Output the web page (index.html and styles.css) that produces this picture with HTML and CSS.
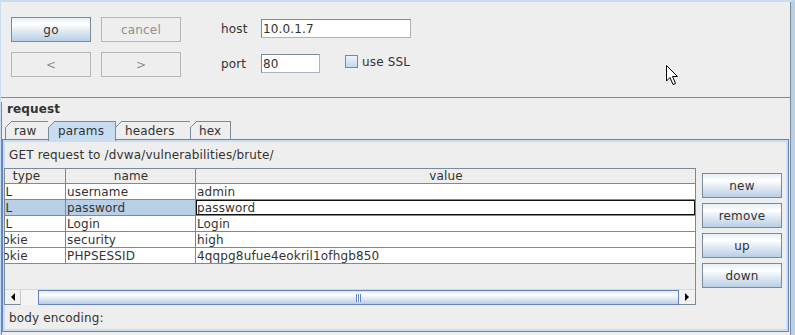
FILE: index.html
```html
<!DOCTYPE html>
<html lang="en">
<head>
  <meta charset="UTF-8">
  <title>Repeater</title>
  <link rel="stylesheet" href="styles.css">
</head>
<body>
  <div class="window">
    <div class="main">
      <div class="toolbar">
        <div class="tool-row">
          <button class="btn">go</button>
          <button class="btn" disabled>cancel</button>
          <span class="field-label">host</span>
          <input class="field field-host" value="10.0.1.7">
        </div>
        <div class="tool-row">
          <button class="btn" disabled>&lt;</button>
          <button class="btn" disabled>&gt;</button>
          <span class="field-label">port</span>
          <input class="field field-port" value="80">
          <span class="ssl">
            <span class="checkbox"></span>
            <span>use SSL</span>
          </span>
        </div>
      </div>

      <div class="request">
        <div class="request-title">request</div>
        <div class="tabs">
          <div class="tab tab-raw">raw</div>
          <div class="tab tab-params active">params</div>
          <div class="tab tab-headers">headers</div>
          <div class="tab tab-hex">hex</div>
        </div>

        <div class="tab-body">
          <div class="summary">GET request to /dvwa/vulnerabilities/brute/</div>

          <div class="params">
            <div class="table-pane">
              <div class="viewport">
                <table>
                  <colgroup>
                    <col class="col-type">
                    <col class="col-name">
                    <col class="col-value">
                  </colgroup>
                  <thead>
                    <tr>
                      <th>type</th>
                      <th>name</th>
                      <th class="value">value</th>
                    </tr>
                  </thead>
                  <tbody>
                    <tr>
                      <td>URL</td>
                      <td>username</td>
                      <td class="value">admin</td>
                    </tr>
                    <tr class="selected">
                      <td>URL</td>
                      <td>password</td>
                      <td class="value editing">password</td>
                    </tr>
                    <tr>
                      <td>URL</td>
                      <td>Login</td>
                      <td class="value">Login</td>
                    </tr>
                    <tr>
                      <td>cookie</td>
                      <td>security</td>
                      <td class="value">high</td>
                    </tr>
                    <tr>
                      <td>cookie</td>
                      <td>PHPSESSID</td>
                      <td class="value">4qqpg8ufue4eokril1ofhgb850</td>
                    </tr>
                  </tbody>
                </table>
              </div>
              <div class="hscroll">
                <div class="scroll-btn scroll-left"><span class="arrow-left"></span></div>
                <div class="thumb"><span class="grip"></span></div>
                <div class="scroll-btn scroll-right"><span class="arrow-right"></span></div>
              </div>
            </div>

            <div class="side-buttons">
              <button class="btn">new</button>
              <button class="btn">remove</button>
              <button class="btn">up</button>
              <button class="btn">down</button>
            </div>
          </div>

          <div class="encoding">body encoding:</div>
        </div>
      </div>
    </div>
  </div>

  <svg class="cursor" width="14" height="22" viewBox="0 0 14 22">
    <path d="M0.5 0.5 L0.5 16 L4 12.5 L7 19.5 L9.5 18.5 L6.5 11.5 L11.5 11.5 Z" fill="#ffffff" stroke="#000000" stroke-width="1" stroke-linejoin="round"/>
  </svg>
</body>
</html>
```

FILE: styles.css
```css
body {
  margin: 0;
  background-color: #eeeeee;
  font-family: "DejaVu Sans", sans-serif;
  font-size: 12px;
  letter-spacing: 0.15px;
  color: #333333;
}

.window {
  width: 795px;
  height: 335px;
  box-sizing: border-box;
  border-top: 2px solid #c8ddf2;
  border-left: 1px solid #c8ddf2;
  border-right: 4px solid #b8cfe5;
  overflow: hidden;
}

.main {
  height: 100%;
  border-right: 1px solid #7a8a99;
}

/* top controls */

.toolbar {
  height: 96px;
  box-sizing: border-box;
  border-bottom: 1px solid #7a8a99;
  padding: 15px 0 0 10px;
}

.tool-row {
  display: flex;
  align-items: flex-start;
  height: 25px;
}

.tool-row + .tool-row {
  margin-top: 10px;
}

.btn {
  width: 80px;
  height: 25px;
  box-sizing: border-box;
  padding: 1px 0 0;
  border: 1px solid #7a8a99;
  background: linear-gradient(#e6eef7 0%, #ffffff 28%, #dde8f3 60%, #b8cfe5 100%);
  font: inherit;
  letter-spacing: inherit;
  color: #333333;
}

.btn + .btn {
  margin-left: 10px;
}

.btn:disabled {
  background: #eeeeee;
  border-color: #b3b5b8;
  color: #8e8f91;
}

.field-label {
  width: 40px;
  margin-left: 40px;
  line-height: 25px;
}

.field {
  height: 19px;
  margin-top: 2px;
  box-sizing: border-box;
  border: 1px solid #7a8a99;
  border-right-color: #a9b4bf;
  border-bottom-color: #a9b4bf;
  padding: 0 1px;
  font: inherit;
  letter-spacing: inherit;
  color: #333333;
  background: #ffffff;
}

.field-host {
  width: 150px;
}

.field-port {
  width: 59px;
}

.ssl {
  display: flex;
  align-items: center;
  height: 19px;
  margin-left: 25px;
}

.checkbox {
  width: 13px;
  height: 13px;
  box-sizing: border-box;
  border: 1px solid #7a8a99;
  background: linear-gradient(#eef4f9, #c4d7ea);
  margin-right: 4px;
}

/* request panel */

.request {
  border-left: 1px solid #7a8a99;
  height: 237px;
}

.request-title {
  font-weight: bold;
  line-height: 14px;
  margin: 4px 0 0 5px;
}

.tabs {
  display: flex;
  height: 18px;
  margin: 5px 0 0 3px;
}

.tab {
  position: relative;
  height: 18px;
  box-sizing: border-box;
  border: 1px solid #7a8a99;
  border-bottom: none;
  padding: 1px 0 0 8px;
  line-height: 17px;
}

.tab + .tab {
  margin-left: -1px;
}

.tab::before {
  content: "";
  position: absolute;
  left: -1px;
  top: -1px;
  width: 7px;
  height: 7px;
  background: linear-gradient(to bottom right, #eeeeee 0 calc(50% - 0.6px), #7a8a99 calc(50% - 0.6px) calc(50% + 0.6px), transparent calc(50% + 0.6px));
}

.tab.active {
  height: 20px;
  background-color: #c8ddf2;
  z-index: 1;
}

.tab-raw { width: 44px; }
.tab-params { width: 68px; padding-left: 9px; }
.tab-headers { width: 76px; padding-left: 9px; }
.tab-hex { width: 41px; }

.tab-body {
  height: 193px;
  box-sizing: border-box;
  margin-right: 1px;
  border: 1px solid #6382bf;
  box-shadow: inset 0 2px #c8ddf2, inset 0 0 0 2px #c8ddf2;
}

.summary {
  line-height: 14px;
  padding: 8px 0 0 6px;
}

.params {
  display: flex;
  align-items: flex-start;
  margin: 6px 0 0 1px;
}

/* parameter table */

.table-pane {
  width: 692px;
  box-sizing: border-box;
  border: 1px solid #7a8a99;
  border-bottom: none;
}

.viewport {
  height: 120px;
  overflow: hidden;
}

table {
  width: 708px;
  margin-left: -18px;
  table-layout: fixed;
  border-spacing: 0;
}

.col-type { width: 79px; }
.col-name { width: 130px; }
.col-value { width: 499px; }

th, td {
  padding: 0 0 0 1px;
  border-right: 1px solid #7a8a99;
  border-bottom: 1px solid #7a8a99;
  white-space: nowrap;
  overflow: hidden;
  text-align: left;
}

th {
  font-weight: normal;
  text-align: center;
  line-height: 14px;
  background-color: #eeeeee;
}

td {
  line-height: 14px;
  padding-top: 1px;
  background-color: #ffffff;
}

th.value, td.value {
  border-right: none;
}

tr.selected td {
  background-color: #b8cfe5;
}

tr.selected td.editing {
  background-color: #ffffff;
  box-shadow: inset 0 0 0 1px #111111;
}

.hscroll {
  display: flex;
  height: 16px;
  box-sizing: border-box;
  border-top: 1px solid #d6d9dc;
  background-color: #f4f4f4;
}

.scroll-btn {
  width: 16px;
  display: flex;
  align-items: center;
  justify-content: center;
  box-sizing: border-box;
  background: #f2f2f2;
  border-bottom: 1px solid #7a8a99;
}

.scroll-left {
  border-right: 1px solid #c2c8ce;
}

.scroll-right {
  width: 17px;
  border-left: 1px solid #6382bf;
}

.arrow-left {
  width: 0;
  height: 0;
  border-top: 4px solid transparent;
  border-bottom: 4px solid transparent;
  border-right: 4px solid #000000;
}

.arrow-right {
  width: 0;
  height: 0;
  border-top: 4px solid transparent;
  border-bottom: 4px solid transparent;
  border-left: 4px solid #000000;
}

.thumb {
  flex: 1;
  margin-left: 17px;
  display: flex;
  align-items: center;
  justify-content: center;
  box-sizing: border-box;
  border: 1px solid #6382bf;
  border-right: none;
  background: linear-gradient(#dde8f3 0%, #ffffff 30%, #dde8f3 60%, #b8cfe5 100%);
}

.grip {
  width: 5px;
  height: 8px;
  background: repeating-linear-gradient(to right, #6382bf 0 1px, #ffffff 1px 2px);
}

.side-buttons {
  display: flex;
  flex-direction: column;
  gap: 5px;
  margin: 5px 0 0 6px;
}

.side-buttons .btn + .btn {
  margin-left: 0;
}

.encoding {
  line-height: 14px;
  margin-top: 6px;
  padding-left: 6px;
}

.cursor {
  position: absolute;
  left: 666px;
  top: 65px;
}
```
